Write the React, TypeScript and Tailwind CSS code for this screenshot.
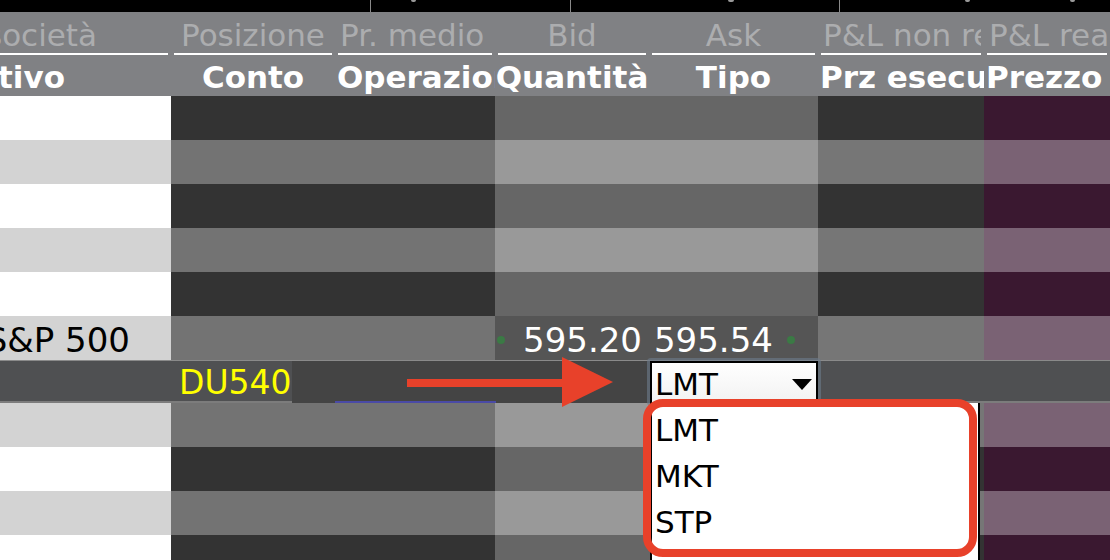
import React from "react";

const cols = "grid grid-cols-[171px_164px_160px_154px_169px_166px_126px]";

// colours per column: [dark row, light row]
const shades = [
  ["bg-white", "bg-[#d3d3d3]"],
  ["bg-[#333333]", "bg-[#737373]"],
  ["bg-[#333333]", "bg-[#737373]"],
  ["bg-[#666666]", "bg-[#999999]"],
  ["bg-[#666666]", "bg-[#999999]"],
  ["bg-[#333333]", "bg-[#767676]"],
  ["bg-[#3a1830]", "bg-[#7a6274]"],
];

function Row({ light }: { light: boolean }) {
  return (
    <div className={`${cols} h-[44px] shrink-0`}>
      {shades.map((s, i) => (
        <div key={i} className={light ? s[1] : s[0]} />
      ))}
    </div>
  );
}

function QuoteRow() {
  return (
    <div className={`${cols} h-[44px] shrink-0 text-[34px] leading-none`}>
      <div className="bg-[#d3d3d3] flex items-center justify-end pr-[41px] pt-[3px] overflow-hidden whitespace-nowrap text-black">
        S&amp;P 500
      </div>
      <div className="bg-[#737373]" />
      <div className="bg-[#737373]" />
      <div className="col-span-2 bg-[#555555] flex items-center text-white pt-[3px]">
        <span className="w-[8px] h-[8px] rounded-full bg-[#3b7a45] ml-[2px]" />
        <span className="ml-[18px]">595.20</span>
        <span className="ml-[12px]">595.54</span>
        <span className="w-[8px] h-[8px] rounded-full bg-[#3b7a45] ml-[14px]" />
      </div>
      <div className="bg-[#767676]" />
      <div className="bg-[#7a6274]" />
    </div>
  );
}

function OrderRow() {
  return (
    <div className="flex h-[43px] shrink-0 border-t border-[#8a8a8a] bg-[#4f5052] relative">
      <div className="w-[292px] flex items-center border-b-2 border-[#7c7c7c] whitespace-nowrap pt-[2px]">
        <span className="ml-[179px] text-[33px] leading-none text-[#ffff00]">DU540</span>
      </div>
      <div className="w-[358px] bg-[#444444] relative">
        <div className="absolute left-[43px] w-[161px] bottom-0 h-[2px] bg-[#4a4aa6]" />
      </div>
      <div className="w-[168px] relative bg-[#444444]">
        <div className="absolute -inset-[3px] rounded-[4px] bg-[#6d7b8c]/60" />
        <div className="relative h-[44px] bg-gradient-to-b from-white to-[#f2f2f2] border-2 border-black flex items-center pl-[3px] pr-[4px] pt-[2px] text-[31px] leading-none text-black">
          <span>LMT</span>
          <span className="ml-auto w-0 h-0 border-l-[10px] border-r-[10px] border-t-[11px] border-l-transparent border-r-transparent border-t-black" />
        </div>
      </div>
      <div className="flex-1 border-b-2 border-[#7c7c7c]" />
    </div>
  );
}

export default function App() {
  const head1 = [
    { t: "Nome società", c: "justify-end pr-[71px]" },
    { t: "Posizione", c: "justify-center" },
    { t: "Pr. medio", c: "justify-start pl-[2px]" },
    { t: "Bid", c: "justify-center" },
    { t: "Ask", c: "justify-center" },
    { t: "P&L non realizzato", c: "justify-start pl-[2px]" },
    { t: "P&L realizzato", c: "justify-start pl-[2px]" },
  ];
  const head2 = [
    { t: "Attivo", c: "justify-end pr-[106px]" },
    { t: "Conto", c: "justify-center" },
    { t: "Operazione", c: "justify-start pl-[2px]" },
    { t: "Quantità", c: "justify-center" },
    { t: "Tipo", c: "justify-center" },
    { t: "Prz esecuzione", c: "justify-start pl-[2px]" },
    { t: "Prezzo limite", c: "justify-start pl-[2px]" },
  ];

  return (
    <div className="w-[1110px] h-[560px] overflow-hidden bg-black relative font-['DejaVu_Sans',Verdana,sans-serif] flex flex-col">
      {/* top strip with column splits */}
      <div className="flex h-[12px] shrink-0 bg-black">
        <div className="w-[370px]" />
        <div className="w-[200px] border-l border-[#8a8a8a] flex">
          <span className="ml-[40px] w-[5px] h-[2px] rounded-b bg-[#9a9a9a]" />
        </div>
        <div className="w-[269px] border-l border-[#8a8a8a] flex">
          <span className="ml-[157px] w-[6px] h-[2px] rounded-b bg-[#9a9a9a]" />
        </div>
        <div className="flex-1 border-l border-[#8a8a8a] flex">
          <span className="ml-[125px] w-[5px] h-[2px] rounded-b bg-[#9a9a9a]" />
          <span className="ml-[100px] w-[5px] h-[2px] rounded-b bg-[#9a9a9a]" />
        </div>
      </div>

      {/* header row 1 */}
      <div className={`${cols} h-[43px] shrink-0 bg-[#808184]`}>
        {head1.map((h, i) => (
          <div key={i} className={i === 0 ? "pr-[3px] overflow-hidden" : "px-[3px] overflow-hidden"}>
            <div className={`h-full border-b-2 border-white flex items-center overflow-hidden whitespace-nowrap text-[31px] leading-none text-[#acadaf] pt-[6px] ${h.c}`}>
              {h.t}
            </div>
          </div>
        ))}
      </div>

      {/* header row 2 */}
      <div className={`${cols} h-[41px] shrink-0 bg-[#808184]`}>
        {head2.map((h, i) => (
          <div key={i} className={`flex items-center overflow-hidden whitespace-nowrap text-[31px] leading-none font-bold text-white px-[3px] pt-[4px] ${h.c}`}>
            {h.t}
          </div>
        ))}
      </div>

      <Row light={false} />
      <Row light={true} />
      <Row light={false} />
      <Row light={true} />
      <Row light={false} />
      <QuoteRow />
      <OrderRow />
      <Row light={true} />
      <Row light={false} />
      <Row light={true} />
      <Row light={false} />

      {/* annotation arrow */}
      <svg className="absolute left-[405px] top-[356px]" width="210" height="52" viewBox="0 0 210 52">
        <rect x="2" y="23" width="160" height="8" fill="#e8412a" />
        <polygon points="157,1 208,26 157,51" fill="#e8412a" />
      </svg>

      {/* open dropdown list */}
      <div className="absolute left-[650px] top-[403px] w-[330px] h-[170px] bg-white border-2 border-black border-t-0 text-[31px] leading-none text-black">
        <div className="pt-[4px] pl-[3px] flex flex-col">
          <div className="h-[46px] flex items-center">LMT</div>
          <div className="h-[46px] flex items-center">MKT</div>
          <div className="h-[46px] flex items-center">STP</div>
        </div>
      </div>

      {/* highlight frame */}
      <div className="absolute left-[643px] top-[399px] w-[334px] h-[158px] rounded-[20px] border-[8px] border-[#e8412a]" />
    </div>
  );
}
